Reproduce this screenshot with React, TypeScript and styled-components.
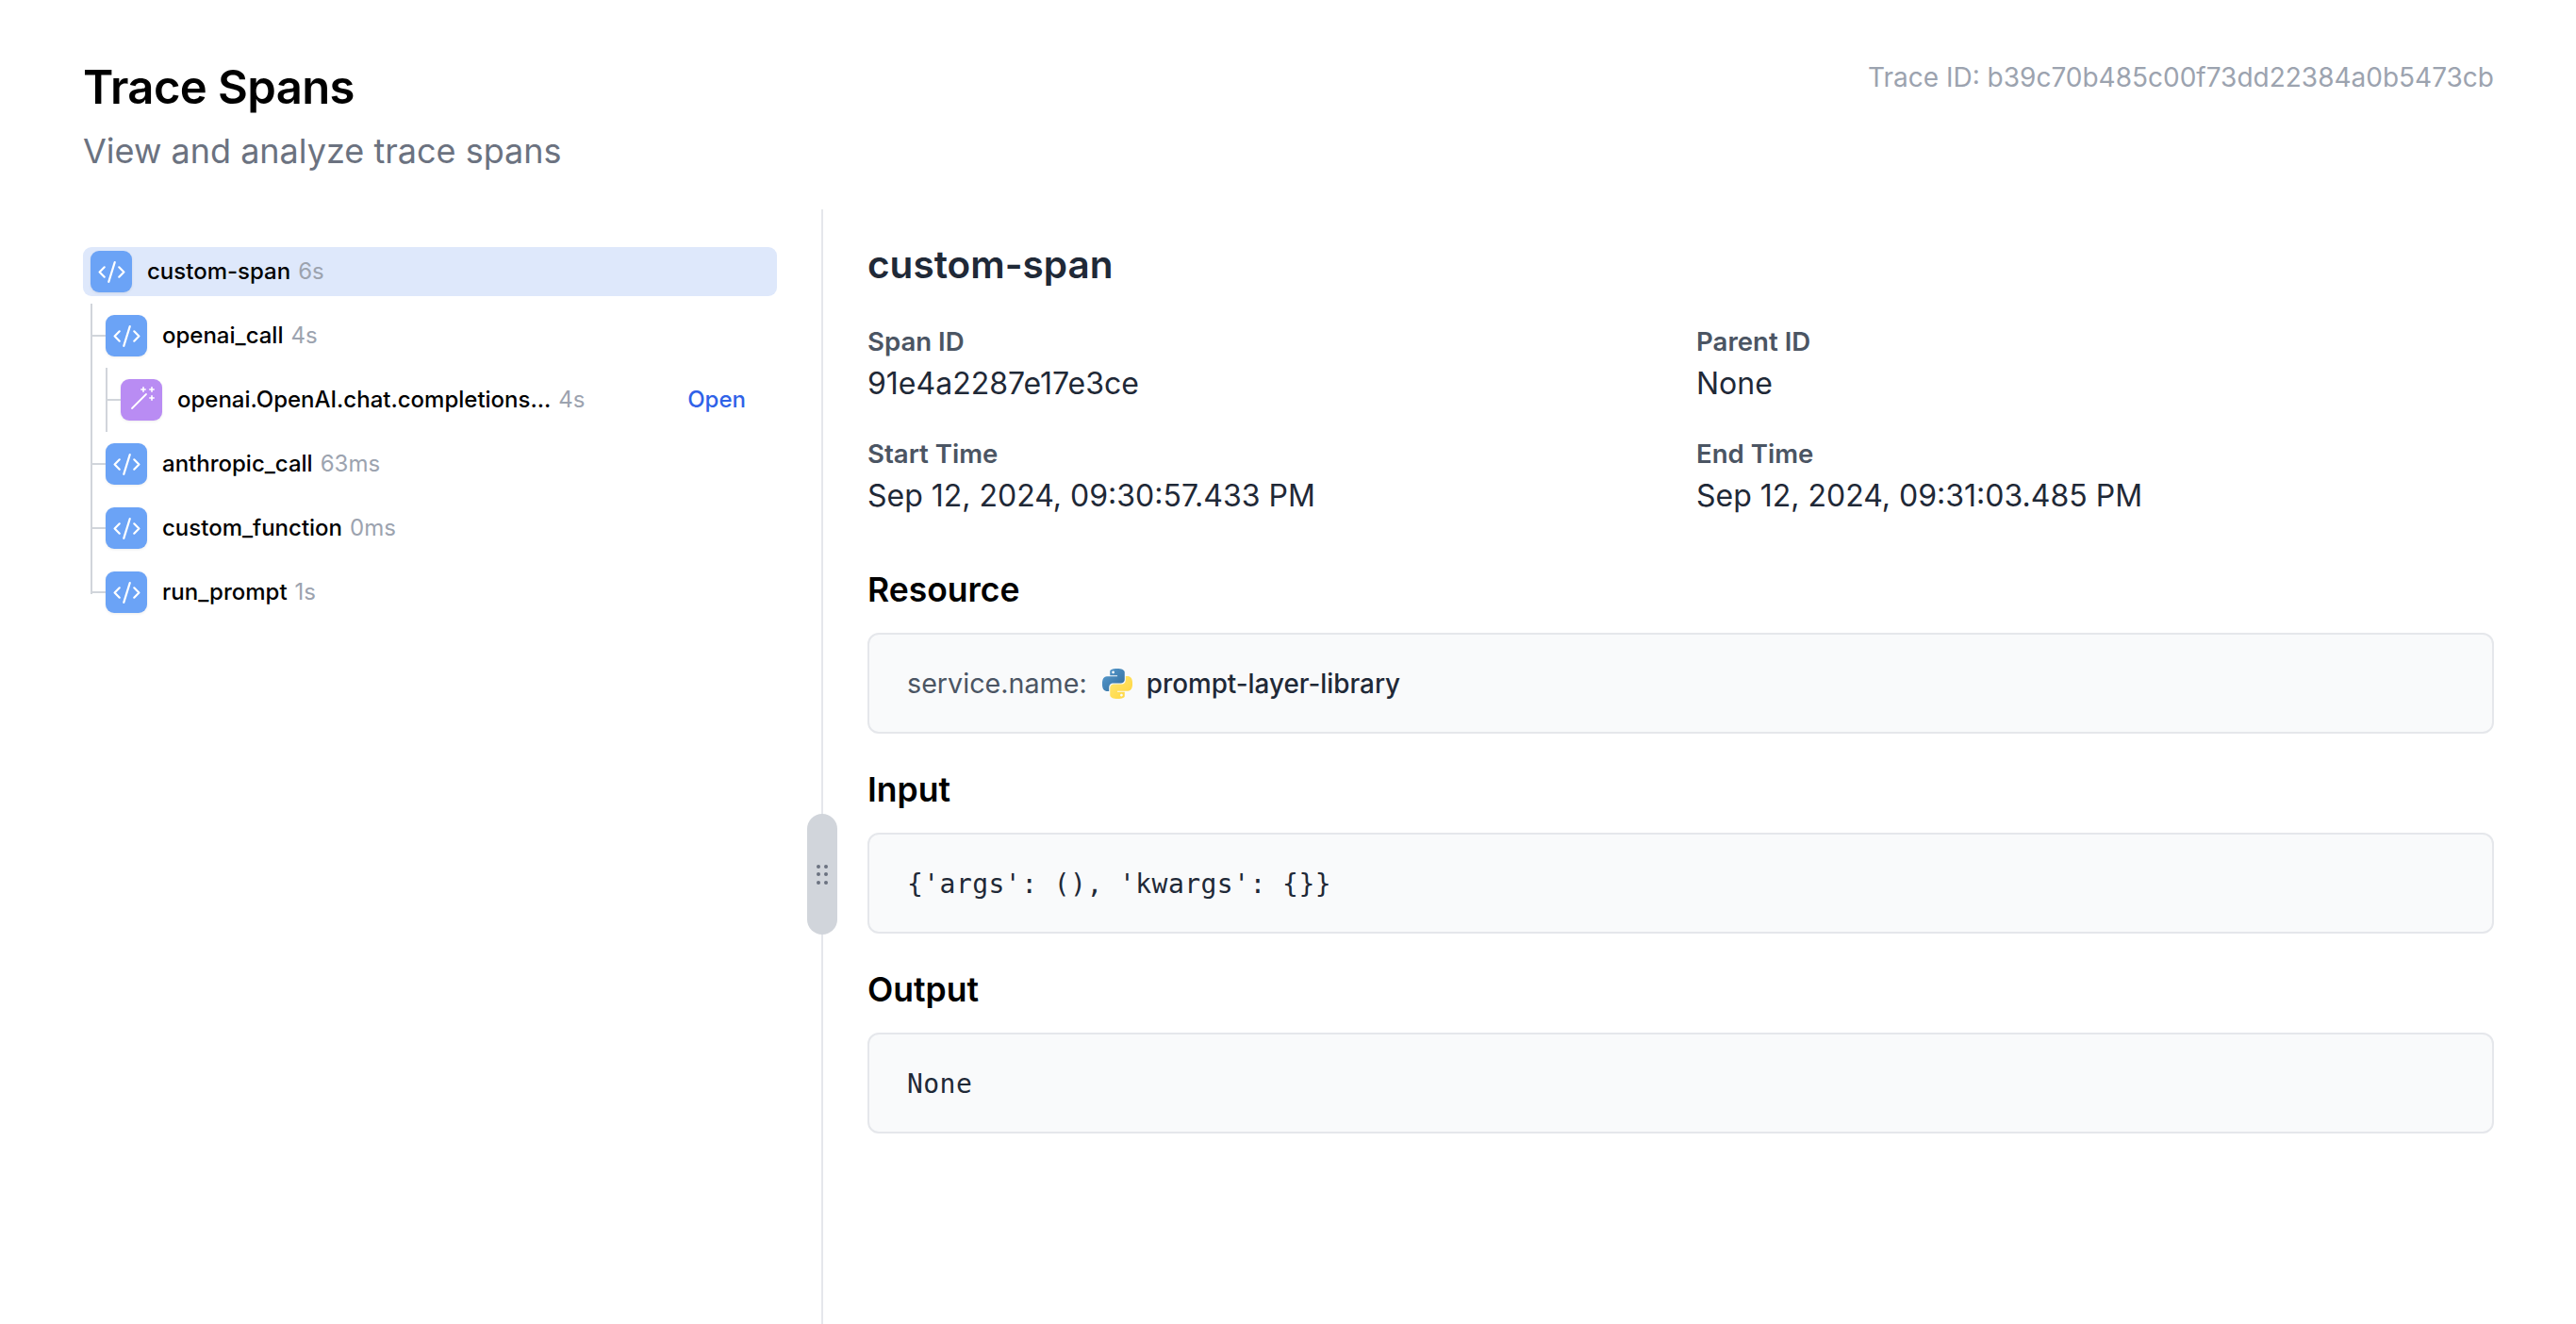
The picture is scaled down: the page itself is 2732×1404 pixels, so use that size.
import React from 'react';
import styled, { createGlobalStyle } from 'styled-components';
import { CodeXml } from 'lucide-react';

const GlobalStyle = createGlobalStyle`
    html, body {
        margin: 0;
        padding: 0;
        background: #ffffff;
    }
    * {
        box-sizing: border-box;
    }
`;

const Page = styled.div`
    width: 2732px;
    height: 1404px;
    padding: 0 87px 0 88px;
    overflow: hidden;
    font-family: Inter, "Liberation Sans", sans-serif;
    color: #000000;
`;

const Header = styled.header`
    display: flex;
    justify-content: space-between;
    align-items: flex-start;
    height: 222px;
    padding-top: 63px;
`;

const Title = styled.h1`
    margin: 0;
    font-size: 49px;
    line-height: 60px;
    font-weight: 600;
    letter-spacing: -0.6px;
`;

const Subtitle = styled.p`
    margin: 12px 0 0;
    font-size: 36px;
    line-height: 50px;
    color: #6b7280;
`;

const TraceId = styled.div`
    margin-top: -3px;
    font-size: 28px;
    line-height: 44px;
    color: #9ca3af;
`;

const Panels = styled.div`
    display: flex;
    height: 1182px;
`;

const TreePanel = styled.div`
    width: 783px;
    flex: none;
    padding: 40px 47px 0 0;
`;

const Splitter = styled.div`
    position: relative;
    width: 2px;
    flex: none;
    background: #e5e7eb;
`;

const Handle = styled.div`
    position: absolute;
    left: -15px;
    top: 641px;
    width: 32px;
    height: 128px;
    border-radius: 16px;
    background: #d1d5db;
    display: flex;
    align-items: center;
    justify-content: center;
`;

const Dots = styled.div`
    display: grid;
    grid-template-columns: 4px 4px;
    grid-auto-rows: 4px;
    gap: 4.5px;
`;

const Dot = styled.span`
    border-radius: 50%;
    background: #6b7280;
`;

const SpanList = styled.ul<{ $nested?: boolean }>`
    position: relative;
    list-style: none;
    margin: 16px 0 0 16px;
    padding: 0;
    display: flex;
    flex-direction: column;
    gap: 16px;

    &::before {
        content: '';
        position: absolute;
        left: -8px;
        top: -8px;
        bottom: ${(p) => (p.$nested ? '-8px' : '24px')};
        width: 2px;
        background: #d1d5db;
    }
`;

const RootList = styled.ul`
    list-style: none;
    margin: 0;
    padding: 0;
`;

const SpanRow = styled.div<{ $selected?: boolean; $child?: boolean }>`
    position: relative;
    display: flex;
    align-items: center;
    height: 52px;
    padding: 0 33px 0 8px;
    border-radius: 9px;
    background: ${(p) => (p.$selected ? '#dee8fb' : 'transparent')};

    ${(p) =>
        p.$child &&
        `&::before {
            content: '';
            position: absolute;
            left: -6px;
            top: 25px;
            width: 14px;
            height: 2px;
            background: #d1d5db;
        }`}
`;

const SpanIcon = styled.span<{ $kind: 'code' | 'llm' }>`
    width: 44px;
    height: 44px;
    flex: none;
    display: flex;
    align-items: center;
    justify-content: center;
    border-radius: 9px;
    color: #ffffff;
    background: ${(p) => (p.$kind === 'code' ? '#6ba3f6' : '#b98cf3')};
    box-shadow: 0 1px 3px rgba(0, 0, 0, 0.08);
`;

const SpanName = styled.span`
    margin: -2px 0 0 16px;
    font-size: 24px;
    font-weight: 500;
    white-space: nowrap;
`;

const Duration = styled.span`
    margin: -2px 0 0 8px;
    font-size: 24px;
    color: #9ca3af;
    white-space: nowrap;
`;

const OpenLink = styled.a`
    margin: -2px 0 0 auto;
    font-size: 24px;
    font-weight: 500;
    color: #2f62e8;
`;

const DetailPanel = styled.div`
    flex: 1;
    min-width: 0;
    padding: 33px 0 0 47px;
`;

const SpanTitle = styled.h2`
    margin: 0;
    font-size: 40.5px;
    line-height: 52px;
    font-weight: 600;
    color: #1f2937;
`;

const MetaGrid = styled.div`
    display: grid;
    grid-template-columns: 1fr 1fr;
    column-gap: 33px;
    row-gap: 34px;
    margin: 37px 0 54px;
`;

const MetaLabel = styled.div`
    font-size: 27.6px;
    line-height: 36px;
    font-weight: 600;
    color: #4b5563;
`;

const MetaValue = styled.div`
    margin-top: 5px;
    font-size: 32px;
    line-height: 44px;
    color: #1f2937;
`;

const SectionTitle = styled.h3`
    margin: 36px 0 0;
    font-size: 35.5px;
    line-height: 48px;
    font-weight: 600;
`;

const Box = styled.div`
    display: flex;
    align-items: center;
    height: 107px;
    margin-top: 21px;
    padding: 0 40px;
    background: #f9fafb;
    border: 2px solid #e5e7eb;
    border-radius: 12px;
`;

const ResourceKey = styled.span`
    font-size: 28.7px;
    color: #4b5563;
`;

const ResourceValue = styled.span`
    margin-left: 15px;
    font-size: 27.8px;
    font-weight: 500;
    color: #1f2937;
`;

const PythonIcon = styled.svg`
    width: 32px;
    height: 32px;
    margin-left: 16px;
    flex: none;
`;

const Code = styled.code`
    padding-top: 2px;
    font-family: "DejaVu Sans Mono", "Liberation Mono", monospace;
    font-size: 28px;
    color: #1f2937;
    letter-spacing: 0.45px;
`;

const WandIcon = () => (
    <svg width="30" height="30" viewBox="0 0 30 30" fill="none" stroke="#ffffff" strokeLinecap="round">
        <path d="M5 24 L20 9" strokeWidth="1.8" />
        <path d="M17 1.8v4.4M14.8 4h4.4M26 1.8v4.4M23.8 4h4.4M26 10.8v4.4M23.8 13h4.4" strokeWidth="1.6" />
    </svg>
);

const Python = () => (
    <PythonIcon viewBox="0 0 24 24">
        <defs>
            <linearGradient id="pyBlue" x1="0" y1="0" x2="1" y2="1">
                <stop offset="0" stopColor="#5a9fd4" />
                <stop offset="1" stopColor="#306998" />
            </linearGradient>
            <linearGradient id="pyYellow" x1="0" y1="0" x2="1" y2="1">
                <stop offset="0" stopColor="#ffe873" />
                <stop offset="1" stopColor="#ffd43b" />
            </linearGradient>
        </defs>
        <path
            fill="url(#pyBlue)"
            d="M14.25.18l.9.2.73.26.59.3.45.32.34.34.25.34.16.33.1.3.04.26.02.2-.01.13V8.5l-.05.63-.13.55-.21.46-.26.38-.3.31-.33.25-.35.19-.35.14-.33.1-.3.07-.26.04-.21.02H8.77l-.69.05-.59.14-.5.22-.41.27-.33.32-.27.35-.2.36-.15.37-.1.35-.07.32-.04.27-.02.21v3.06H3.17l-.21-.03-.28-.07-.32-.12-.35-.18-.36-.26-.36-.36-.35-.46-.32-.59-.28-.73-.21-.88-.14-1.05-.05-1.23.06-1.22.16-1.04.24-.87.32-.71.36-.57.4-.44.42-.33.42-.24.4-.16.36-.1.32-.05.24-.01h.16l.06.01h8.16v-.83H6.18l-.01-2.75-.02-.37.05-.34.11-.31.17-.28.25-.26.31-.23.38-.2.44-.18.51-.15.58-.12.64-.1.71-.06.77-.04.84-.02 1.27.05zm-6.3 1.98l-.23.33-.08.41.08.41.23.34.33.22.41.09.41-.09.33-.22.23-.34.08-.41-.08-.41-.23-.33-.33-.22-.41-.09-.41.09z"
        />
        <path
            fill="url(#pyYellow)"
            d="M21.04 6.11l.28.06.32.12.35.18.36.27.36.35.35.47.32.59.28.73.21.88.14 1.04.05 1.23-.06 1.23-.16 1.04-.24.86-.32.71-.36.57-.4.45-.42.33-.42.24-.4.16-.36.09-.32.05-.24.02-.16-.01h-8.22v.82h5.84l.01 2.76.02.36-.05.34-.11.31-.17.29-.25.25-.31.24-.38.2-.44.17-.51.15-.58.13-.64.09-.71.07-.77.04-.84.01-1.27-.04-1.07-.14-.9-.2-.73-.25-.59-.3-.45-.33-.34-.34-.25-.34-.16-.33-.1-.3-.04-.25-.02-.2.01-.13v-5.34l.05-.64.13-.54.21-.46.26-.38.3-.32.33-.24.35-.2.35-.14.33-.1.3-.06.26-.04.21-.02.13-.01h5.84l.69-.05.59-.14.5-.21.41-.28.33-.32.27-.35.2-.36.15-.36.1-.35.07-.32.04-.28.02-.21V6.07h2.09l.14.01zm-6.47 14.25l-.23.33-.08.41.08.41.23.33.33.23.41.08.41-.08.33-.23.23-.33.08-.41-.08-.41-.23-.33-.33-.23-.41-.08-.41.08z"
        />
    </PythonIcon>
);

const Row: React.FC<{
    name: string;
    time: string;
    kind?: 'code' | 'llm';
    selected?: boolean;
    child?: boolean;
    open?: boolean;
}> = ({ name, time, kind = 'code', selected, child = true, open }) => (
    <SpanRow $selected={selected} $child={child}>
        <SpanIcon $kind={kind}>
            {kind === 'code' ? <CodeXml size={31} strokeWidth={1.7} /> : <WandIcon />}
        </SpanIcon>
        <SpanName>{name}</SpanName>
        <Duration>{time}</Duration>
        {open && <OpenLink>Open</OpenLink>}
    </SpanRow>
);

const metadata = [
    ['Span ID', '91e4a2287e17e3ce'],
    ['Parent ID', 'None'],
    ['Start Time', 'Sep 12, 2024, 09:30:57.433 PM'],
    ['End Time', 'Sep 12, 2024, 09:31:03.485 PM'],
];

const App: React.FC = () => (
    <Page>
        <GlobalStyle />
        <Header>
            <div>
                <Title>Trace Spans</Title>
                <Subtitle>View and analyze trace spans</Subtitle>
            </div>
            <TraceId>Trace ID: b39c70b485c00f73dd22384a0b5473cb</TraceId>
        </Header>
        <Panels>
            <TreePanel>
                <RootList>
                    <li>
                        <Row name="custom-span" time="6s" selected child={false} />
                        <SpanList>
                            <li>
                                <Row name="openai_call" time="4s" />
                                <SpanList $nested>
                                    <li>
                                        <Row name="openai.OpenAI.chat.completions..." time="4s" kind="llm" open />
                                    </li>
                                </SpanList>
                            </li>
                            <li>
                                <Row name="anthropic_call" time="63ms" />
                            </li>
                            <li>
                                <Row name="custom_function" time="0ms" />
                            </li>
                            <li>
                                <Row name="run_prompt" time="1s" />
                            </li>
                        </SpanList>
                    </li>
                </RootList>
            </TreePanel>
            <Splitter>
                <Handle>
                    <Dots>
                        {Array.from({ length: 6 }, (_, i) => (
                            <Dot key={i} />
                        ))}
                    </Dots>
                </Handle>
            </Splitter>
            <DetailPanel>
                <SpanTitle>custom-span</SpanTitle>
                <MetaGrid>
                    {metadata.map(([label, value]) => (
                        <div key={label}>
                            <MetaLabel>{label}</MetaLabel>
                            <MetaValue>{value}</MetaValue>
                        </div>
                    ))}
                </MetaGrid>
                <SectionTitle>Resource</SectionTitle>
                <Box>
                    <ResourceKey>service.name:</ResourceKey>
                    <Python />
                    <ResourceValue>prompt-layer-library</ResourceValue>
                </Box>
                <SectionTitle>Input</SectionTitle>
                <Box>
                    <Code>{"{'args': (), 'kwargs': {}}"}</Code>
                </Box>
                <SectionTitle>Output</SectionTitle>
                <Box>
                    <Code>None</Code>
                </Box>
            </DetailPanel>
        </Panels>
    </Page>
);

export default App;
